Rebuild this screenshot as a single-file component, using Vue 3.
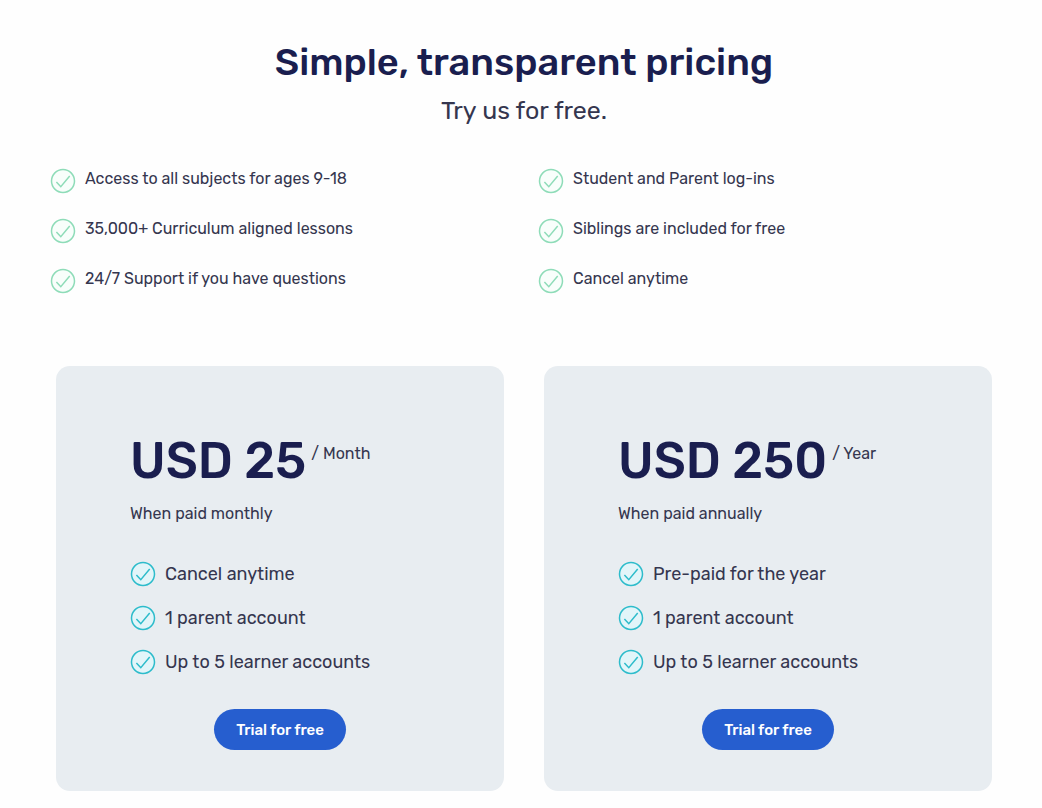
<template>
  <main class="pricing">
    <header class="heading">
      <h1>Simple, transparent pricing</h1>
      <p>Try us for free.</p>
    </header>

    <ul class="features">
      <li v-for="feature in features" :key="feature">
        <svg class="check green" viewBox="0 0 26 26" aria-hidden="true">
          <circle cx="13" cy="13" r="11.5" />
          <path d="M6.4 14l4.4 4.7L19.7 8" />
        </svg>
        <span>{{ feature }}</span>
      </li>
    </ul>

    <div class="plans">
      <section v-for="plan in plans" :key="plan.period" class="plan">
        <h2>
          <span class="price">{{ plan.price }}</span>
          <span class="period">/ {{ plan.period }}</span>
        </h2>
        <p class="note">{{ plan.note }}</p>
        <ul class="perks">
          <li v-for="perk in plan.perks" :key="perk">
            <svg class="check teal" viewBox="0 0 26 26" aria-hidden="true">
              <circle cx="13" cy="13" r="11.5" />
              <path d="M6.4 14l4.4 4.7L19.7 8" />
            </svg>
            <span>{{ perk }}</span>
          </li>
        </ul>
        <button type="button" class="btn">Trial for free</button>
      </section>
    </div>
  </main>
</template>

<script setup>
const features = [
  'Access to all subjects for ages 9-18',
  'Student and Parent log-ins',
  '35,000+ Curriculum aligned lessons',
  'Siblings are included for free',
  '24/7 Support if you have questions',
  'Cancel anytime',
]

const plans = [
  {
    price: 'USD 25',
    period: 'Month',
    note: 'When paid monthly',
    perks: ['Cancel anytime', '1 parent account', 'Up to 5 learner accounts'],
  },
  {
    price: 'USD 250',
    period: 'Year',
    note: 'When paid annually',
    perks: ['Pre-paid for the year', '1 parent account', 'Up to 5 learner accounts'],
  },
]
</script>

<style>
body {
  margin: 0;
  background: #fefefe;
}
</style>

<style scoped>
.pricing {
  padding: 38px 50px 18px 56px;
  font-family: Rubik, Roboto, sans-serif;
  color: #35364f;
}
h1,
h2,
p,
ul {
  margin: 0;
  padding: 0;
}
ul {
  list-style: none;
}
.heading {
  text-align: center;
}
h1 {
  font-size: 38px;
  line-height: 48px;
  font-weight: 500;
  color: #1a1e4f;
}
.heading p {
  margin-top: 8px;
  font-size: 25px;
  line-height: 34px;
}
.features {
  display: grid;
  grid-template-columns: 1fr 1fr;
  gap: 24px 40px;
  margin: 40px 6px 0 -6px;
  font-size: 16px;
}
.features li {
  display: flex;
  gap: 9px;
  line-height: 22px;
}
.check {
  flex: none;
  width: 26px;
  height: 26px;
  stroke-width: 1.5;
}
.check path {
  fill: none;
}
.green {
  fill: #f8fefb;
  stroke: #8edcb8;
}
.teal {
  fill: #e2f5f9;
  stroke: #2dbccb;
}
.plans {
  display: grid;
  grid-template-columns: 1fr 1fr;
  gap: 40px;
  margin-top: 72px;
}
.plan {
  display: flex;
  flex-direction: column;
  padding: 64px 74px 41px;
  background: #e8edf1;
  border-radius: 14px;
}
h2 {
  display: flex;
  gap: 5px;
  font-weight: 400;
}
.price {
  font-size: 50px;
  line-height: 62px;
  font-weight: 500;
  color: #1a1e4f;
}
.period {
  padding-top: 14px;
  font-size: 16px;
  line-height: 20px;
}
.note {
  margin-top: 12px;
  font-size: 16px;
  line-height: 20px;
}
.perks {
  display: grid;
  gap: 18px;
  margin-top: 37px;
  font-size: 18px;
}
.perks li {
  display: flex;
  align-items: center;
  gap: 9px;
}
.btn {
  align-self: center;
  margin-top: 34px;
  padding: 0 22px;
  height: 41px;
  border: 0;
  border-radius: 21px;
  background: #265ecf;
  color: #fff;
  font: 500 15px/20px Rubik, Roboto, sans-serif;
  cursor: pointer;
}
</style>
